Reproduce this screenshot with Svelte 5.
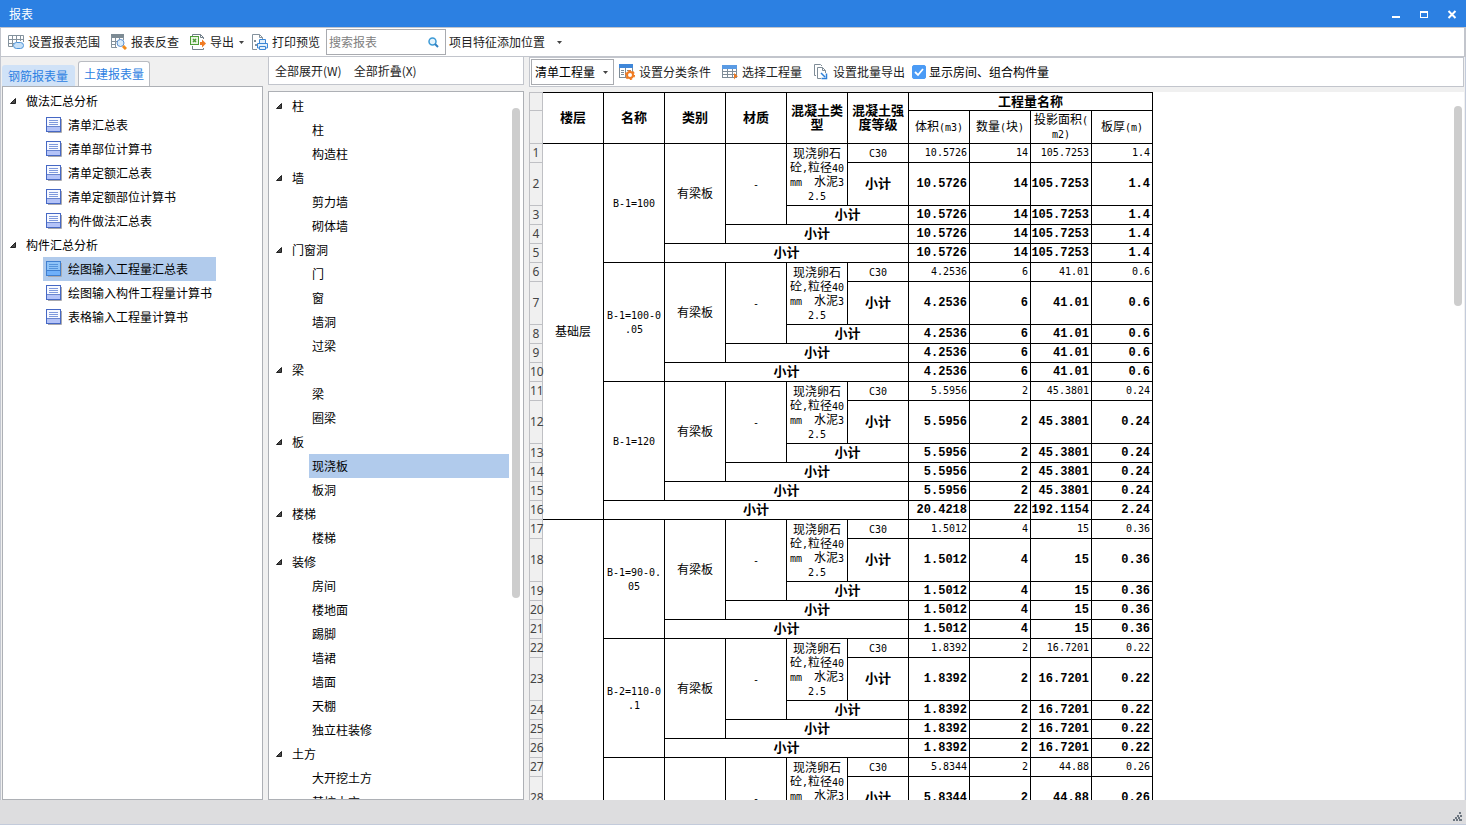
<script>
  const reportTree = [
    { label: '做法汇总分析', items: ['清单汇总表', '清单部位计算书', '清单定额汇总表', '清单定额部位计算书', '构件做法汇总表'] },
    { label: '构件汇总分析', items: ['绘图输入工程量汇总表', '绘图输入构件工程量计算书', '表格输入工程量计算书'] }
  ];

  const partTree = [
    { label: '柱', items: ['柱', '构造柱'] },
    { label: '墙', items: ['剪力墙', '砌体墙'] },
    { label: '门窗洞', items: ['门', '窗', '墙洞', '过梁'] },
    { label: '梁', items: ['梁', '圈梁'] },
    { label: '板', items: ['现浇板', '板洞'] },
    { label: '楼梯', items: ['楼梯'] },
    { label: '装修', items: ['房间', '楼地面', '踢脚', '墙裙', '墙面', '天棚', '独立柱装修'] },
    { label: '土方', items: ['大开挖土方', '基坑土方'] }
  ];

  let report = $state('绘图输入工程量汇总表');
  let part = $state('现浇板');
  let keyword = $state('');
  let showRooms = $state(true);

  const concrete = ['现浇卵石', '砼,粒径40', 'mm　水泥3', '2.5'];

  const floors = [
    {
      name: '基础层',
      total: ['20.4218', '22', '192.1154', '2.24'],
      slabs: [
        { name: ['B-1=100'], values: ['10.5726', '14', '105.7253', '1.4'] },
        { name: ['B-1=100-0', '.05'], values: ['4.2536', '6', '41.01', '0.6'] },
        { name: ['B-1=120'], values: ['5.5956', '2', '45.3801', '0.24'] }
      ]
    },
    {
      name: '',
      total: null,
      slabs: [
        { name: ['B-1=90-0.', '05'], values: ['1.5012', '4', '15', '0.36'] },
        { name: ['B-2=110-0', '.1'], values: ['1.8392', '2', '16.7201', '0.22'] },
        { name: [], values: ['5.8344', '2', '44.88', '0.26'], visible: 3 }
      ]
    }
  ];

  const mid = (lines, rowspan = 1, colspan = 1) => ({ lines, rowspan, colspan });
  const subtotal = (colspan) => ({ lines: ['小计'], rowspan: 1, colspan, bold: true });

  function buildRows() {
    const rows = [];
    for (const floor of floors) {
      const count = floor.slabs.reduce((n, s) => n + (s.visible ?? 5), floor.total ? 1 : 0);
      floor.slabs.forEach((slab, i) => {
        const limit = slab.visible ?? 5;
        const first = [
          mid(slab.name, Math.min(5, limit)),
          mid(limit < 5 ? [] : ['有梁板'], Math.min(4, limit)),
          mid(['-'], Math.min(3, limit)),
          mid(concrete, 2),
          mid(['C30'])
        ];
        if (i === 0) first.unshift(mid([floor.name], count));
        rows.push({ cells: first, values: slab.values, bold: false });
        rows.push({ cells: [subtotal(1)], values: slab.values, bold: true, tall: true });
        for (let n = 2; n < limit; n++) rows.push({ cells: [subtotal(n)], values: slab.values, bold: true });
      });
      if (floor.total) rows.push({ cells: [subtotal(5)], values: floor.total, bold: true });
    }
    return rows;
  }
  const rows = buildRows();

  // Latin runs are set in a narrower monospace face than the Chinese text.
  const runs = (text) =>
    (text.match(/[\x20-\x7e]+|[^\x20-\x7e]+/g) ?? []).map((t) => ({ t, latin: /^[\x20-\x7e]/.test(t) }));
</script>

{#snippet textRuns(text)}
  {#each runs(text) as r}{#if r.latin}<span class="latin">{r.t}</span>{:else}{r.t}{/if}{/each}
{/snippet}

{#snippet arrow()}
  <svg class="arrow" width="6" height="6" viewBox="0 0 6 6" aria-hidden="true"><path d="M5.5 0.5V5.5H0.5Z" fill="#4a4a4a" stroke="#222" /></svg>
{/snippet}

{#snippet caret()}
  <svg class="caret" width="5" height="3" viewBox="0 0 5 3" aria-hidden="true"><path d="M0 0H5L2.5 3Z" fill="#444" /></svg>
{/snippet}

<div class="window">
  <header class="titlebar">
    <h1>报表</h1>
    <div class="controls">
      <button aria-label="最小化"><svg width="10" height="10" viewBox="0 0 10 10"><rect x="1" y="7" width="8" height="2" fill="#fff" /></svg></button>
      <button aria-label="最大化"><svg width="10" height="10" viewBox="0 0 10 10"><path d="M1 2H9V9H1ZM2 4V8H8V4Z" fill="#fff" fill-rule="evenodd" /></svg></button>
      <button aria-label="关闭"><svg width="10" height="10" viewBox="0 0 10 10"><path d="M1.5 2L8.5 9M8.5 2L1.5 9" stroke="#fff" stroke-width="2" /></svg></button>
    </div>
  </header>

  <div class="toolbar main-tools">
    <button class="tool">
      <svg width="16" height="16" viewBox="0 0 16 16">
        <path d="M.5 12.5V1.5H15.5V8M.5 5.5H15.5M.5 9.5H6M4.5 1.5V12.5M8.5 1.5V8M12.5 1.5V7M.5 12.5H5" fill="none" stroke="#84929d" />
        <rect x="5.5" y="8.5" width="10" height="6" rx="3" fill="#c7e0f7" stroke="#4d94d8" />
      </svg>
      <span>设置报表范围</span>
    </button>
    <button class="tool">
      <svg width="16" height="16" viewBox="0 0 16 16">
        <path d="M0 0H13V4H0Z" fill="#7d8b94" />
        <path d="M.5 2V13.5H6M.5 7.5H6M.5 10.5H5M4.5 4V13.5M8.5 4V6M12.5 3V6" fill="none" stroke="#84929d" />
        <circle cx="9.5" cy="9" r="3.5" fill="#d9ecfa" stroke="#5b8fd0" /><path d="M12 12L15 15" stroke="#f28c1c" stroke-width="3" />
      </svg>
      <span>报表反查</span>
    </button>
    <button class="tool export">
      <svg width="16" height="16" viewBox="0 0 16 16">
        <path d="M2.5 2V.5H10.5L13.5 3.5V5M10.5 .5V3.5H13.5M2.5 12V15.5H13.5V14" fill="none" stroke="#73808a" />
        <rect x="0.5" y="2.5" width="8" height="8" fill="#e9f5e3" stroke="#4e9d38" /><path d="M3 5L6 8M6 5L3 8" stroke="#4e9d38" stroke-width="1.5" />
        <path d="M10 8H12V5.5L16 9.5L12 13.5V11H10Z" fill="#f07b22" />
      </svg>
      <span>导出</span>
      {@render caret()}
    </button>
    <button class="tool">
      <svg width="16" height="16" viewBox="0 0 16 16">
        <path d="M5 15.5H.5V.5H7.5L10.5 3.5V5M7.5 .5V3.5H10.5" fill="none" stroke="#84929d" />
        <path d="M2 6H4V8H2ZM3 10H5V12H3Z" fill="#84929d" />
        <path d="M7.5 9V5.5H13.5V9M7.5 14H5.5V9.5H15.5V14H13.5M7.5 12.5H13.5V15.5H7.5Z" fill="#e2f0fc" stroke="#3c87d6" />
      </svg>
      <span>打印预览</span>
    </button>
    <label class="search">
      <input type="text" placeholder="搜索报表" aria-label="搜索报表" bind:value={keyword} />
      <svg width="11" height="11" viewBox="0 0 11 11" aria-hidden="true"><circle cx="4.5" cy="4.5" r="3.5" fill="#e4f3fc" stroke="#3c9ad6" stroke-width="1.5" /><path d="M7 7L10 10" stroke="#2f7fc0" stroke-width="2" /></svg>
    </label>
    <button class="tool position"><span>项目特征添加位置</span>{@render caret()}</button>
  </div>

  <div class="workspace">
    <aside class="left">
      <div class="tabs" role="tablist">
        <button role="tab" aria-selected="false">钢筋报表量</button>
        <button role="tab" aria-selected="true" class="active">土建报表量</button>
      </div>
      <div class="tree reports">
        {#each reportTree as group}
          <div class="branch">{@render arrow()}<span>{group.label}</span></div>
          {#each group.items as item}
            <button class="leaf" class:selected={report === item} onclick={() => (report = item)}>
              <svg width="16" height="16" viewBox="0 0 16 16" aria-hidden="true">
                <path d="M2 15.5H15.5V2" fill="none" stroke="#a9a9ae" />
                <rect x="0.5" y="0.5" width="14" height="14" fill={report === item ? '#8fc4f8' : '#f7f9ff'} stroke={report === item ? '#3f7fd0' : '#4668c4'} />
                <rect x="1" y="10" width="13" height="4" fill={report === item ? '#6fb0fa' : '#b4c3f8'} />
                <path d="M3 3.5H12M3 5.5H12M3 7.5H12" stroke={report === item ? '#5594dc' : '#7f99dc'} />
                <path d="M1 9.5H14" stroke={report === item ? '#3f7fd0' : '#6b86cf'} />
              </svg>
              <span>{item}</span>
            </button>
          {/each}
        {/each}
      </div>
    </aside>

    <section class="middle">
      <div class="toolbar fold-tools">
        <button class="tool">全部展开(W)</button>
        <button class="tool">全部折叠(X)</button>
      </div>
      <div class="tree parts">
        {#each partTree as group}
          <div class="branch">{@render arrow()}<span>{group.label}</span></div>
          {#each group.items as item}
            <button class="leaf" class:selected={part === item} onclick={() => (part = item)}>{item}</button>
          {/each}
        {/each}
        <div class="thumb"></div>
      </div>
    </section>

    <main class="right">
      <div class="toolbar table-tools">
        <div class="select">
          <select aria-label="工程量类型"><option>清单工程量</option></select>
          {@render caret()}
        </div>
        <button class="tool">
          <svg width="16" height="16" viewBox="0 0 16 16">
            <rect x="0.5" y="0.5" width="13" height="13" fill="#fff" stroke="#7f8c97" /><rect width="14" height="4" fill="#3f87d9" />
            <path d="M2 6.5H5M2 8.5H5M2 10.5H5M8 6.5H12" stroke="#7f8c97" /><path d="M6.5 4V13" stroke="#7f8c97" />
            <circle cx="11" cy="11" r="3" fill="#fff" stroke="#f07b22" stroke-width="2" />
            <circle cx="11" cy="11" r="4.3" fill="none" stroke="#f07b22" stroke-width="1.5" stroke-dasharray="2.25 2.25" />
          </svg>
          <span>设置分类条件</span>
        </button>
        <button class="tool">
          <svg width="16" height="16" viewBox="0 0 16 16">
            <rect x="0.5" y="1.5" width="14" height="12" fill="#fff" stroke="#7f8c97" /><rect y="1" width="15" height="4" fill="#5a9be4" />
            <path d="M0 7.5H15M0 10.5H15M5.5 5V14M10.5 5V14" stroke="#7f8c97" /><path d="M12 9L16 12.5L14 13L12 15.5Z" fill="#f07b22" />
          </svg>
          <span>选择工程量</span>
        </button>
        <button class="tool">
          <svg width="16" height="16" viewBox="0 0 16 16">
            <path d="M3 11.5H1.5V.5H7.5L9 2" fill="none" stroke="#7f8c97" />
            <path d="M8 14.5H4.5V3.5H9.5L12.5 6.5V9M9.5 3.5V6.5H12.5" fill="none" stroke="#7f8c97" />
            <path d="M8 9L12 13M13.5 9.5V14.5H8.5" fill="none" stroke="#2f80d8" stroke-width="1.5" />
          </svg>
          <span>设置批量导出</span>
        </button>
        <label class="check"><input type="checkbox" bind:checked={showRooms} /><span>显示房间、组合构件量</span></label>
      </div>

      <div class="sheet">
        <table>
          <colgroup><col class="index" />{#each Array(10) as _}<col class="data" />{/each}</colgroup>
          <thead>
            <tr class="head-top">
              <td class="row-no"></td>
              <th rowspan="2">楼层</th>
              <th rowspan="2">名称</th>
              <th rowspan="2">类别</th>
              <th rowspan="2">材质</th>
              <th rowspan="2"><div>混凝土类</div><div>型</div></th>
              <th rowspan="2"><div>混凝土强</div><div>度等级</div></th>
              <th colspan="4">工程量名称</th>
            </tr>
            <tr class="head-sub">
              <td class="row-no"></td>
              <th>{@render textRuns('体积(m3)')}</th>
              <th>{@render textRuns('数量(块)')}</th>
              <th><div>{@render textRuns('投影面积(')}</div><div>{@render textRuns('m2)')}</div></th>
              <th>{@render textRuns('板厚(m)')}</th>
            </tr>
          </thead>
          <tbody>
            {#each rows as row, i}
              <tr class:tall={row.tall}>
                <th class="row-no" scope="row">{i + 1}</th>
                {#each row.cells as cell}
                  <td rowspan={cell.rowspan} colspan={cell.colspan} class:bold={cell.bold}>
                    {#each cell.lines as line}<div>{@render textRuns(line)}</div>{/each}
                  </td>
                {/each}
                {#each row.values as value}
                  <td class="num" class:bold={row.bold}>{value}</td>
                {/each}
              </tr>
            {/each}
          </tbody>
        </table>
        <div class="thumb"></div>
      </div>
    </main>
  </div>

  <footer>
    <svg width="10" height="10" viewBox="0 0 10 10" aria-hidden="true"><path d="M6 0H8V2H6ZM4 3H6V5H4ZM7 3H9V5H7ZM2 5H4V7H2ZM5 5H7V7H5ZM0 7H2V9H0ZM3 7H5V9H3ZM6 7H9V9H6Z" fill="#6d7680" /></svg>
  </footer>
</div>

<style>
  :global(body) {
    margin: 0;
  }

  .window {
    box-sizing: border-box;
    height: 100vh;
    display: flex;
    flex-direction: column;
    overflow: hidden;
    background: #f0f0f0;
    color: #000;
    font: 12px/18px 'Noto Sans CJK SC', sans-serif;
    border-bottom: 1px solid #c3cbdb;
  }

  button,
  input,
  select {
    font: inherit;
    color: inherit;
    margin: 0;
    padding: 0;
    border: 0;
    background: none;
    white-space: nowrap;
  }

  svg {
    flex: none;
  }

  .titlebar {
    flex: none;
    height: 27px;
    display: flex;
    align-items: center;
    justify-content: space-between;
    padding: 0 9px;
    background: #2c80e2;
    color: #fff;
  }

  h1 {
    margin: 0;
    font: inherit;
  }

  .controls {
    display: flex;
    gap: 18px;
  }

  .controls button {
    display: flex;
  }

  .toolbar {
    box-sizing: border-box;
    flex: none;
    display: flex;
    align-items: center;
    background: #fff;
    border: 1px solid #c2c5cc;
  }

  .tool {
    display: flex;
    align-items: center;
    gap: 4px;
    color: #222;
  }

  .main-tools {
    height: 30px;
    padding-left: 7px;
    gap: 11px;
    border-right-width: 2px;
  }

  .export .caret {
    margin: 0 -3px 0 1px;
  }

  .search {
    box-sizing: border-box;
    display: flex;
    align-items: center;
    width: 120px;
    height: 26px;
    padding: 0 6px 0 2px;
    margin: 0 -8px 0 -5px;
    border: 1px solid #a9abb0;
  }

  .search input {
    flex: 1;
    min-width: 0;
    outline: 0;
  }

  .search input::placeholder {
    color: #808080;
    opacity: 1;
  }

  .position {
    gap: 12px;
  }

  .workspace {
    flex: 1;
    min-height: 0;
    display: flex;
    gap: 5px;
    padding: 0 1px;
    border-left: 1px solid #c3c7d0;
    border-right: 1px solid #c3cbdb;
  }

  .left {
    flex: none;
    width: 261px;
    display: flex;
    flex-direction: column;
    padding-top: 4px;
  }

  .tabs {
    display: flex;
    align-items: flex-end;
    gap: 3px;
    height: 25px;
  }

  .tabs button {
    box-sizing: border-box;
    height: 21px;
    padding: 0 7px 0 6px;
    color: #2c80e2;
    background: #d0e2f7;
    border-radius: 3px 3px 0 0;
  }

  .tabs .active {
    height: 25px;
    padding: 0 5px;
    background: #fff;
    border: 1px solid #b9bcc2;
    border-bottom: 0;
  }

  .tree {
    position: relative;
    flex: 1;
    min-height: 0;
    display: flex;
    flex-direction: column;
    align-items: flex-start;
    overflow: hidden;
    background: #fff;
    border: 1px solid #adb0b5;
  }

  .branch,
  .leaf {
    flex: none;
    display: flex;
    align-items: center;
    height: 24px;
  }

  .branch {
    gap: 10px;
    padding-left: 7px;
  }

  .leaf {
    text-align: left;
  }

  .leaf.selected {
    background: #b1cbec;
  }

  .reports {
    padding-top: 2px;
  }

  .reports .leaf {
    gap: 6px;
    margin-left: 40px;
    padding: 0 4px 0 3px;
  }

  .reports .selected {
    padding-right: 28px;
  }

  .middle {
    flex: none;
    width: 256px;
    display: flex;
    flex-direction: column;
    gap: 6px;
  }

  .fold-tools {
    height: 28px;
    padding-left: 6px;
    gap: 12px;
    border-top: 0;
  }

  .parts {
    padding-top: 2px;
  }

  .parts .leaf {
    margin-left: 40px;
    width: 200px;
    padding-left: 3px;
  }

  .thumb {
    position: absolute;
    width: 8px;
    border-radius: 4px;
    background: #cdcdcd;
  }

  .parts .thumb {
    top: 16px;
    right: 3px;
    height: 490px;
  }

  .right {
    flex: 1;
    min-width: 0;
    display: flex;
    flex-direction: column;
    gap: 5px;
  }

  .table-tools {
    height: 30px;
    gap: 11px;
  }

  .select {
    box-sizing: border-box;
    position: relative;
    display: flex;
    align-items: center;
    width: 83px;
    height: 26px;
    margin: 0 -6px 0 1px;
    border: 1px solid #a9abb0;
  }

  .select select {
    appearance: none;
    width: 100%;
    height: 100%;
    padding-left: 3px;
    outline: 0;
  }

  .select .caret {
    position: absolute;
    right: 5px;
    pointer-events: none;
  }

  .check {
    display: flex;
    align-items: center;
    gap: 3px;
    margin-left: -4px;
  }

  .check input {
    appearance: none;
    width: 14px;
    height: 14px;
    border-radius: 2px;
    border: 1px solid #4b9bf5;
  }

  .check input:checked {
    background: #4b9bf5 url("data:image/svg+xml,%3Csvg xmlns='http://www.w3.org/2000/svg' viewBox='0 0 12 12'%3E%3Cpath d='M2 6L5 9L10 3' fill='none' stroke='white' stroke-width='1.8'/%3E%3C/svg%3E");
  }

  .sheet {
    position: relative;
    flex: 1;
    min-height: 0;
    overflow: hidden;
    background: #fff;
  }

  .sheet .thumb {
    top: 14px;
    right: 2px;
    height: 200px;
  }

  table {
    width: 624px;
    table-layout: fixed;
    border-collapse: separate;
    border-spacing: 0;
    line-height: 14px;
  }

  .index {
    width: 14px;
  }

  .data {
    width: 61px;
  }

  tr {
    height: 19px;
  }

  tr.tall {
    height: 43px;
  }

  .head-sub {
    height: 33px;
  }

  th,
  td {
    box-sizing: border-box;
    padding: 0 0 2px;
    text-align: center;
    vertical-align: middle;
    border: solid #000;
    border-width: 0 1px 1px 0;
    white-space: nowrap;
  }

  th div,
  td div {
    height: 14px;
  }

  .head-top th {
    border-top-width: 1px;
    font-size: 13px;
  }

  .head-sub th {
    font-weight: 400;
  }

  .latin,
  .num {
    font-family: 'DejaVu Sans Mono', monospace;
    font-size: 10px;
  }

  .latin {
    line-height: 10px;
  }

  .bold {
    font-size: 13px;
    font-weight: 700;
  }

  .num {
    text-align: right;
    padding: 0 2px 0 0;
  }

  .num.bold {
    font-family: 'Liberation Mono', monospace;
    font-size: 12px;
    padding-bottom: 1px;
  }

  .row-no {
    padding: 0;
    font-family: 'Noto Sans', sans-serif;
    font-size: 12px;
    font-weight: 400;
    color: #444;
    background: #f0f0f0;
    border-color: #bfc0c4;
    border-left-width: 1px;
  }

  .head-top .row-no {
    border-top: 1px solid #bfc0c4;
  }

  footer {
    flex: none;
    height: 24px;
    display: flex;
    align-items: flex-end;
    justify-content: flex-end;
    box-sizing: border-box;
    padding: 0 3px 2px 0;
    background: #dddddf;
  }
</style>
